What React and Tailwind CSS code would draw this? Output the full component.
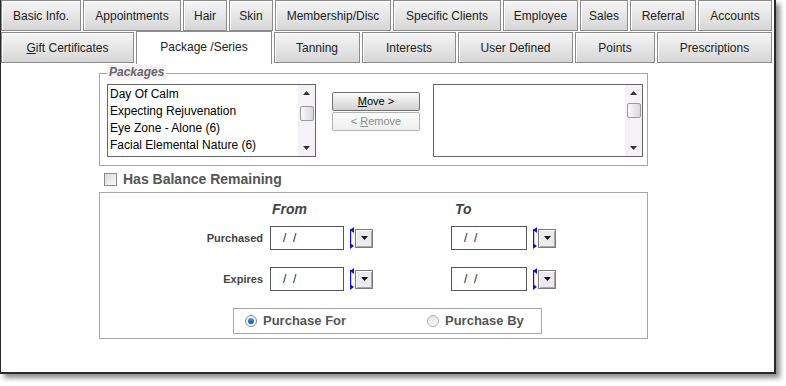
import React from 'react';

const rowOne = [
  ['Basic Info.', 80],
  ['Appointments', 98],
  ['Hair', 44],
  ['Skin', 44],
  ['Membership/Disc', 116],
  ['Specific Clients', 108],
  ['Employee', 75],
  ['Sales', 48],
  ['Referral', 66],
  ['Accounts', 74],
];

const rowTwo = [
  ['Gift Certificates', 133],
  ['Package /Series', 136],
  ['Tanning', 86],
  ['Interests', 94],
  ['User Defined', 115],
  ['Points', 80],
  ['Prescriptions', 115],
];

const packages = [
  'Day Of Calm',
  'Expecting Rejuvenation',
  'Eye Zone - Alone (6)',
  'Facial Elemental Nature (6)',
];

function Tab({ label, w, active }) {
  // first letter of Gift Certificates is underlined (accelerator key)
  const text =
    label === 'Gift Certificates' ? (
      <>
        <span className="underline">G</span>ift Certificates
      </>
    ) : (
      label
    );

  if (active) {
    return (
      <div
        style={{ width: w }}
        className="h-[33px] border border-b-0 border-[#8c8c8c] bg-white flex items-center justify-center pb-[3px] text-[12px] text-[#222]"
      >
        {text}
      </div>
    );
  }
  return (
    <div
      style={{ width: w }}
      className="h-[31px] mt-[1px] border border-[#8c8c8c] bg-gradient-to-b from-[#f6f6f6] to-[#d6d6d6] shadow-[inset_1px_1px_0_#ffffff] flex items-center justify-center pt-[1px] text-[12px] text-[#222]"
    >
      {text}
    </div>
  );
}

function Scrollbar({ thumbTop }) {
  return (
    <div className="relative w-[17px] h-full bg-[#f4f2f6] flex flex-col items-center justify-between py-[6px]">
      <svg width="7" height="4" viewBox="0 0 7 4">
        <polygon points="3.5,0 7,4 0,4" fill="#333" />
      </svg>
      <svg width="7" height="4" viewBox="0 0 7 4">
        <polygon points="0,0 7,0 3.5,4" fill="#333" />
      </svg>
      <div
        style={{ top: thumbTop }}
        className="absolute left-[2px] w-[14px] h-[15px] border border-[#9a9a9a] rounded-[2px] bg-gradient-to-r from-[#fafafa] to-[#d8d8d8]"
      />
    </div>
  );
}

function Spinner() {
  return (
    <svg width="4" height="22" viewBox="0 0 4 22" className="ml-[6px]">
      <polygon points="4,0 0,3 4,6" fill="#1010e0" />
      <rect x="0" y="2" width="1.2" height="18" fill="#1010e0" />
      <polygon points="0,16 4,19 0,22" fill="#1010e0" />
    </svg>
  );
}

function DropButton() {
  return (
    <div className="ml-[1px] w-[18px] h-[19px] border border-[#7a7a7a] bg-[#eceaee] shadow-[inset_1px_1px_0_#ffffff,inset_-1px_-1px_0_#a8a8a8] flex items-center justify-center">
      <svg width="7" height="4" viewBox="0 0 7 4">
        <polygon points="0,0 7,0 3.5,4" fill="#111" />
      </svg>
    </div>
  );
}

function DateField({ w }) {
  return (
    <div className="flex items-center">
      <div
        style={{ width: w }}
        className="h-[24px] border border-[#555] bg-white flex items-center pl-[12px] text-[12px] text-[#222] whitespace-pre"
      >
        {'/  /'}
      </div>
      <Spinner />
      <DropButton />
    </div>
  );
}

function Radio({ checked }) {
  return checked ? (
    <div className="w-[12px] h-[12px] rounded-full border border-[#8a8a8a] bg-[#f2f2f2] flex items-center justify-center">
      <div className="w-[6px] h-[6px] rounded-full bg-gradient-to-b from-[#4aa0e8] to-[#0c4f9a]" />
    </div>
  ) : (
    <div className="w-[12px] h-[12px] rounded-full border border-[#b0b0b0] bg-gradient-to-b from-[#e4e4e4] to-[#fafafa]" />
  );
}

export default function App() {
  return (
    <div
      className="w-[786px] h-[386px] bg-white"
      style={{ fontFamily: '"Liberation Sans", Arial, sans-serif' }}
    >
      <div className="w-[776px] h-[374px] border-l border-r-2 border-b-2 border-[#2a2a2a] bg-white shadow-[4px_4px_5px_rgba(0,0,0,0.45)]">
        {/* tab rows */}
        <div className="flex gap-[2px]">
          {rowOne.map(([label, w]) => (
            <div key={label} style={{ width: w }} className="h-[31px] border border-[#8c8c8c] bg-gradient-to-b from-[#f6f6f6] to-[#d6d6d6] shadow-[inset_1px_1px_0_#ffffff] flex items-center justify-center text-[12px] text-[#222]">
              {label}
            </div>
          ))}
        </div>
        <div className="flex items-start gap-[2px]">
          {rowTwo.map(([label, w]) => (
            <Tab key={label} label={label} w={w} active={label === 'Package /Series'} />
          ))}
        </div>

        <div className="ml-[98px] w-[549px]">
          {/* Packages group */}
          <div className="relative mt-[9px] h-[93px] border border-[#a6a6a6] flex pl-[7px] pt-[10px]">
            <span className="absolute -top-[9px] left-[7px] px-[2px] bg-[#f5f1f5] text-[12px] leading-[15px] font-bold italic text-[#666]">
              Packages
            </span>
            <div className="w-[209px] h-[73px] border border-[#666] bg-white flex">
              <div className="flex-1 pl-[2px] pt-[1px]">
                {packages.map((p) => (
                  <div key={p} className="h-[17px] leading-[17px] text-[12px] text-black whitespace-nowrap">
                    {p}
                  </div>
                ))}
              </div>
              <Scrollbar thumbTop={21} />
            </div>
            <div className="ml-[16px] mt-[8px] w-[88px] flex flex-col gap-[1px]">
              <button className="h-[19px] border border-[#707070] rounded-[2px] bg-gradient-to-b from-[#fbfbfb] to-[#d2d2d2] text-[11px] text-black leading-none">
                <span className="underline">M</span>ove &gt;
              </button>
              <button className="h-[19px] border border-[#b4b4b4] rounded-[2px] bg-gradient-to-b from-[#fbfbfb] to-[#efefef] text-[11px] text-[#8a8a8a] leading-none">
                &lt; <span className="underline">R</span>emove
              </button>
            </div>
            <div className="ml-[13px] w-[210px] h-[73px] border border-[#666] bg-white flex justify-end">
              <Scrollbar thumbTop={18} />
            </div>
          </div>

          {/* balance checkbox */}
          <div className="mt-[5px] h-[16px] flex items-center pl-[5px]">
            <div className="w-[13px] h-[13px] border border-[#8a8a8a] bg-gradient-to-br from-[#dcdcdc] to-[#fafafa]" />
            <span className="ml-[6px] text-[14px] font-bold text-[#555]">Has Balance Remaining</span>
          </div>

          {/* date range group */}
          <div className="mt-[5px] h-[147px] border border-[#a6a6a6] pt-[8px]">
            <div className="flex h-[16px] text-[14px] leading-[16px] font-bold italic text-[#444]">
              <div className="w-[172px]" />
              <div className="w-[183px]">From</div>
              <div>To</div>
            </div>

            <div className="mt-[9px] flex items-center">
              <div className="w-[163px] text-right text-[11px] font-bold text-[#444]">Purchased</div>
              <div className="ml-[7px]">
                <DateField w={74} />
              </div>
              <div className="ml-[78px]">
                <DateField w={76} />
              </div>
            </div>

            <div className="mt-[17px] flex items-center">
              <div className="w-[163px] text-right text-[11px] font-bold text-[#444]">Expires</div>
              <div className="ml-[7px]">
                <DateField w={74} />
              </div>
              <div className="ml-[78px]">
                <DateField w={76} />
              </div>
            </div>

            <div className="mt-[17px] ml-[133px] w-[309px] h-[26px] border border-[#a6a6a6] flex items-center pl-[11px] text-[13px] font-bold text-[#555]">
              <div className="w-[182px] flex items-center gap-[6px]">
                <Radio checked />
                <span>Purchase For</span>
              </div>
              <div className="flex items-center gap-[6px]">
                <Radio />
                <span>Purchase By</span>
              </div>
            </div>
          </div>
        </div>
      </div>
    </div>
  );
}
